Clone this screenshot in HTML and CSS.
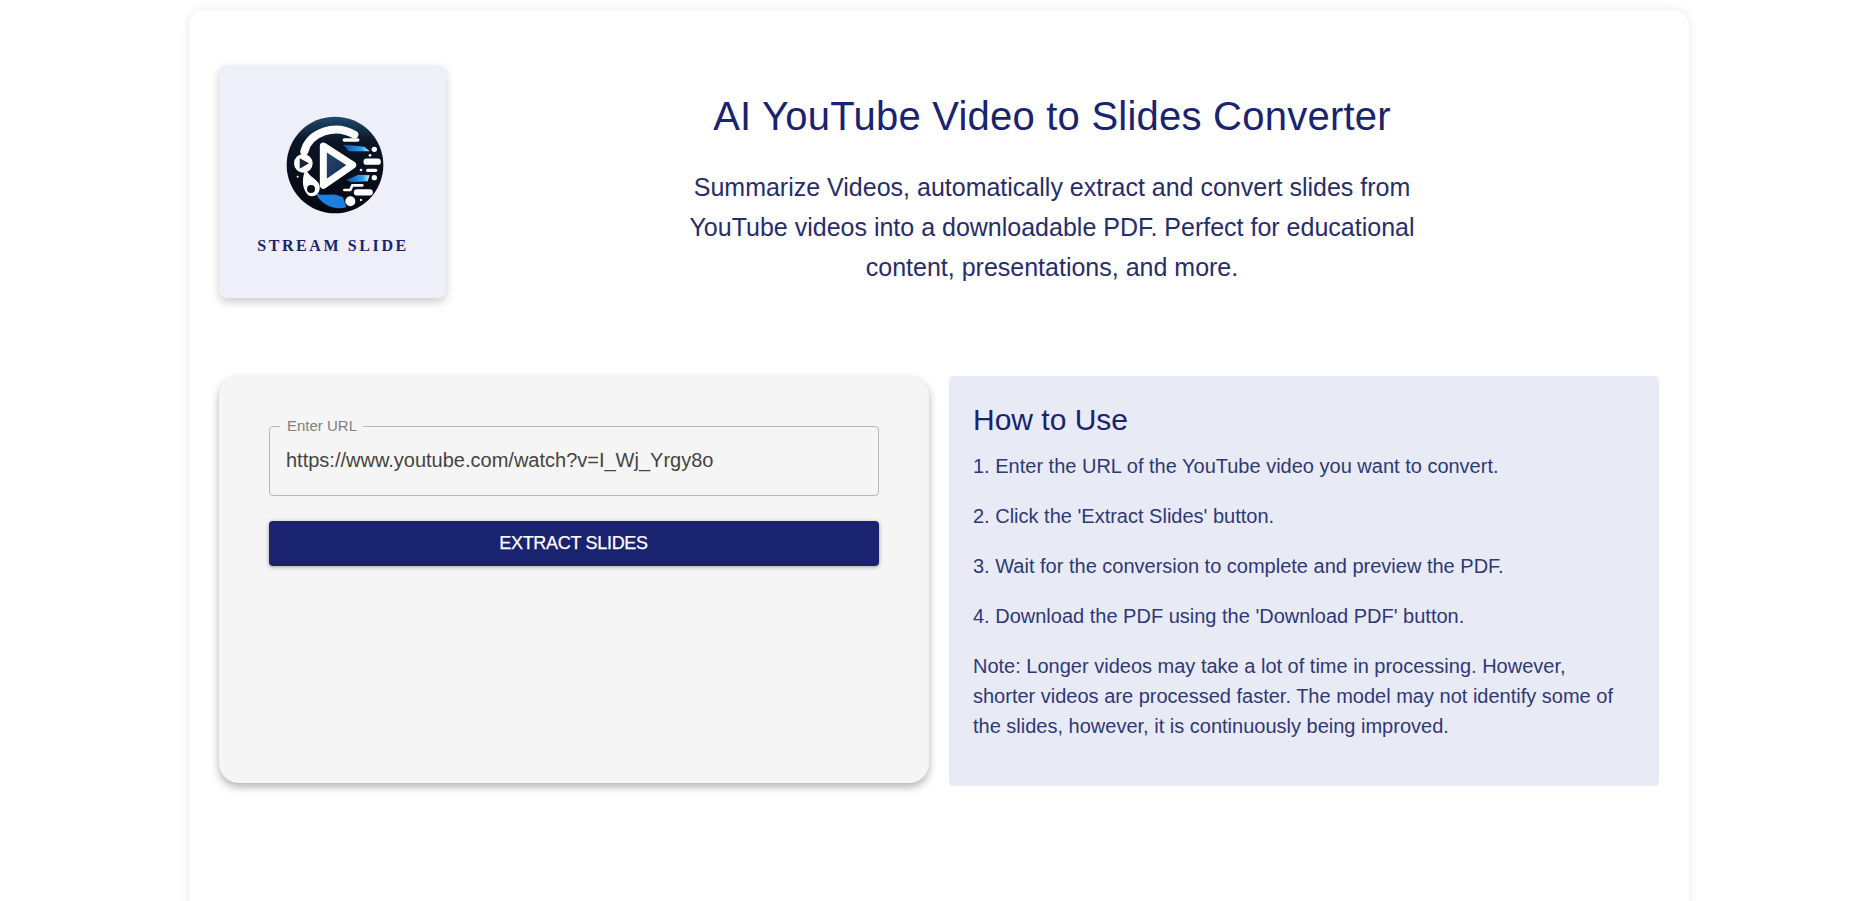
FILE: index.html
```html
<!DOCTYPE html>
<html lang="en">
<head>
<meta charset="utf-8">
<title>Stream Slide</title>
<link rel="stylesheet" href="styles.css">
</head>
<body>
<main class="container">
  <header class="header">
    <div class="logo-card">
      <svg class="logo" viewBox="33 18 294 294" aria-label="Stream Slide logo">
        <defs>
          <linearGradient id="rim" x1="0" y1="0" x2="0" y2="1">
            <stop offset="0" stop-color="#1f4a6e"/>
            <stop offset="0.25" stop-color="#0b1626"/>
            <stop offset="1" stop-color="#05070f"/>
          </linearGradient>
          <linearGradient id="streak" x1="0" y1="0" x2="1" y2="0">
            <stop offset="0" stop-color="#0b4fa8"/>
            <stop offset="0.7" stop-color="#2aa3f5"/>
            <stop offset="1" stop-color="#d6f0ff"/>
          </linearGradient>
          <linearGradient id="tri" x1="0" y1="0" x2="1" y2="1">
            <stop offset="0" stop-color="#254d78"/>
            <stop offset="1" stop-color="#14233f"/>
          </linearGradient>
        </defs>
        <circle cx="180" cy="165" r="145" fill="url(#rim)"/>
        <path d="M88 124C104 66 180 40 238 74" class="s-white" stroke-width="24"/>
        <path d="M208 90H248" class="s-white" stroke-width="11"/>
        <path d="M205 104L268 110L284 124L222 124Z" fill="url(#streak)"/>
        <path d="M214 210L250 194L284 196L278 214L228 216Z" fill="url(#streak)"/>
        <path d="M122 250C150 262 170 244 204 262L214 292C180 302 136 284 122 250Z" fill="#1c7fe0"/>
        <path d="M145 108L233 165L145 226Z" fill="url(#tri)" stroke="#fff" stroke-width="21" stroke-linejoin="round"/>
        <circle cx="85" cy="160" r="28" fill="#fff"/>
        <path d="M74 145L102 160L74 176Z" fill="#1a2438"/>
        <path d="M92 178C82 200 78 232 98 254C122 270 144 240 130 218C118 204 102 198 92 178Z" fill="#fff"/>
        <circle cx="108" cy="237" r="12" fill="#0a0f1e"/>
        <path d="M275 155H308" class="s-white" stroke-width="19"/>
        <path d="M278 181H302" class="s-white" stroke-width="10"/>
        <circle cx="298" cy="118" r="8" fill="#fff"/>
        <circle cx="298" cy="203" r="8" fill="#fff"/>
        <circle cx="285" cy="136" r="4" fill="#fff"/>
        <circle cx="258" cy="180" r="4" fill="#fff"/>
        <path d="M208 240H226L232 226H262" class="s-white" stroke-width="8"/>
        <path d="M246 247H284" class="s-white" stroke-width="19"/>
        <circle cx="226" cy="274" r="15" fill="#fff"/>
        <circle cx="258" cy="270" r="3.5" fill="#fff"/>
        <circle cx="68" cy="200" r="3" fill="#fff"/>
      </svg>
      <div class="brand">STREAM SLIDE</div>
    </div>
    <div class="hero">
      <h1 class="title">AI YouTube Video to Slides Converter</h1>
      <p class="lead">Summarize Videos, automatically extract and convert slides from<br>YouTube videos into a downloadable PDF. Perfect for educational<br>content, presentations, and more.</p>
    </div>
  </header>
  <section class="panels">
    <form class="form-panel">
      <fieldset class="field">
        <legend class="field-label">Enter URL</legend>
        <input class="field-input" type="text" value="https://www.youtube.com/watch?v=I_Wj_Yrgy8o" aria-label="Enter URL">
      </fieldset>
      <button class="extract" type="button">EXTRACT SLIDES</button>
    </form>
    <aside class="howto">
      <h2 class="howto-title">How to Use</h2>
      <p class="step">1. Enter the URL of the YouTube video you want to convert.</p>
      <p class="step">2. Click the 'Extract Slides' button.</p>
      <p class="step">3. Wait for the conversion to complete and preview the PDF.</p>
      <p class="step">4. Download the PDF using the 'Download PDF' button.</p>
      <p class="note">Note: Longer videos may take a lot of time in processing. However, shorter videos are processed faster. The model may not identify some of the slides, however, it is continuously being improved.</p>
    </aside>
  </section>
</main>
</body>
</html>
```
FILE: styles.css
```css
* { box-sizing: border-box; }
html, body { height: 100%; overflow: hidden; }
body {
  margin: 0;
  padding-left: 2px;
  background: #fff;
  font-family: "Liberation Sans", Arial, sans-serif;
}
.container {
  width: 1500px;
  min-height: 1000px;
  margin: 10px auto 0;
  padding: 55px 30px 30px;
  background: #fff;
  border-radius: 16px;
  box-shadow: 0 0 10px rgba(0, 0, 0, 0.1);
}
.header { display: flex; align-items: flex-start; }
.logo-card {
  width: 227px;
  height: 233px;
  flex: none;
  padding-top: 51px;
  display: flex;
  flex-direction: column;
  align-items: center;
  background: #eeeff9;
  border-radius: 8px;
  box-shadow: 0 4px 10px rgba(0, 0, 0, 0.2);
}
.logo { width: 98px; height: 98px; margin-left: 4px; display: block; filter: blur(0.4px); }
.s-white { fill: none; stroke: #fff; stroke-linecap: round; stroke-linejoin: round; }
.brand {
  margin-top: 23px;
  margin-left: 1px;
  font-family: "Liberation Serif", "Times New Roman", serif;
  font-weight: 700;
  font-size: 16px;
  line-height: 18px;
  letter-spacing: 2.6px;
  color: #1a2370;
}
.hero { flex: 1; padding: 28px 1px 0 0; text-align: center; }
.title {
  margin: 0 0 28px;
  font-size: 40px;
  font-weight: 400;
  line-height: 46px;
  letter-spacing: 0.23px;
  color: #1a2370;
}
.lead {
  margin: 0;
  font-size: 25px;
  line-height: 40px;
  color: #262d6c;
}
.panels { display: flex; gap: 20px; margin-top: 78px; align-items: flex-start; }
.form-panel {
  width: 710px;
  height: 407px;
  padding: 50px;
  background: #f5f5f5;
  border-radius: 20px;
  box-shadow: 0 4px 8px rgba(0, 0, 0, 0.3);
}
.field {
  margin: -8px 0 0;
  padding: 0 16px;
  height: 78px;
  border: 1px solid #b9b9b9;
  border-radius: 4px;
}
.field-label {
  padding: 0 6px 0 7px;
  margin-left: -6px;
  font-size: 15px;
  line-height: 16px;
  color: #808080;
}
.field-input {
  display: block;
  width: 100%;
  height: 49px;
  margin-top: 2px;
  padding: 0;
  border: 0;
  outline: 0;
  background: transparent;
  font: 20px "Liberation Sans", Arial, sans-serif;
  color: #444;
}
.extract {
  display: block;
  width: 100%;
  height: 45px;
  margin-top: 25px;
  padding: 0 1px 0 0;
  border: 0;
  border-radius: 4px;
  background: #1a2370;
  color: #fff;
  font: 18px "Liberation Sans", Arial, sans-serif;
  letter-spacing: -0.3px;
  -webkit-text-stroke: 0.25px #fff;
  box-shadow: 0 1px 4px rgba(0, 0, 0, 0.35);
}
.howto {
  width: 710px;
  height: 410px;
  padding: 25px 28px 24px 24px;
  background: #e8eaf6;
  border-radius: 4px;
  color: #2f3878;
  font-size: 20px;
  line-height: 30px;
}
.howto-title {
  margin: 0 0 12px;
  font-size: 30px;
  font-weight: 400;
  line-height: 38px;
  color: #1a2370;
}
.step { margin: 0 0 20px; }
.note { margin: 0; }
```
